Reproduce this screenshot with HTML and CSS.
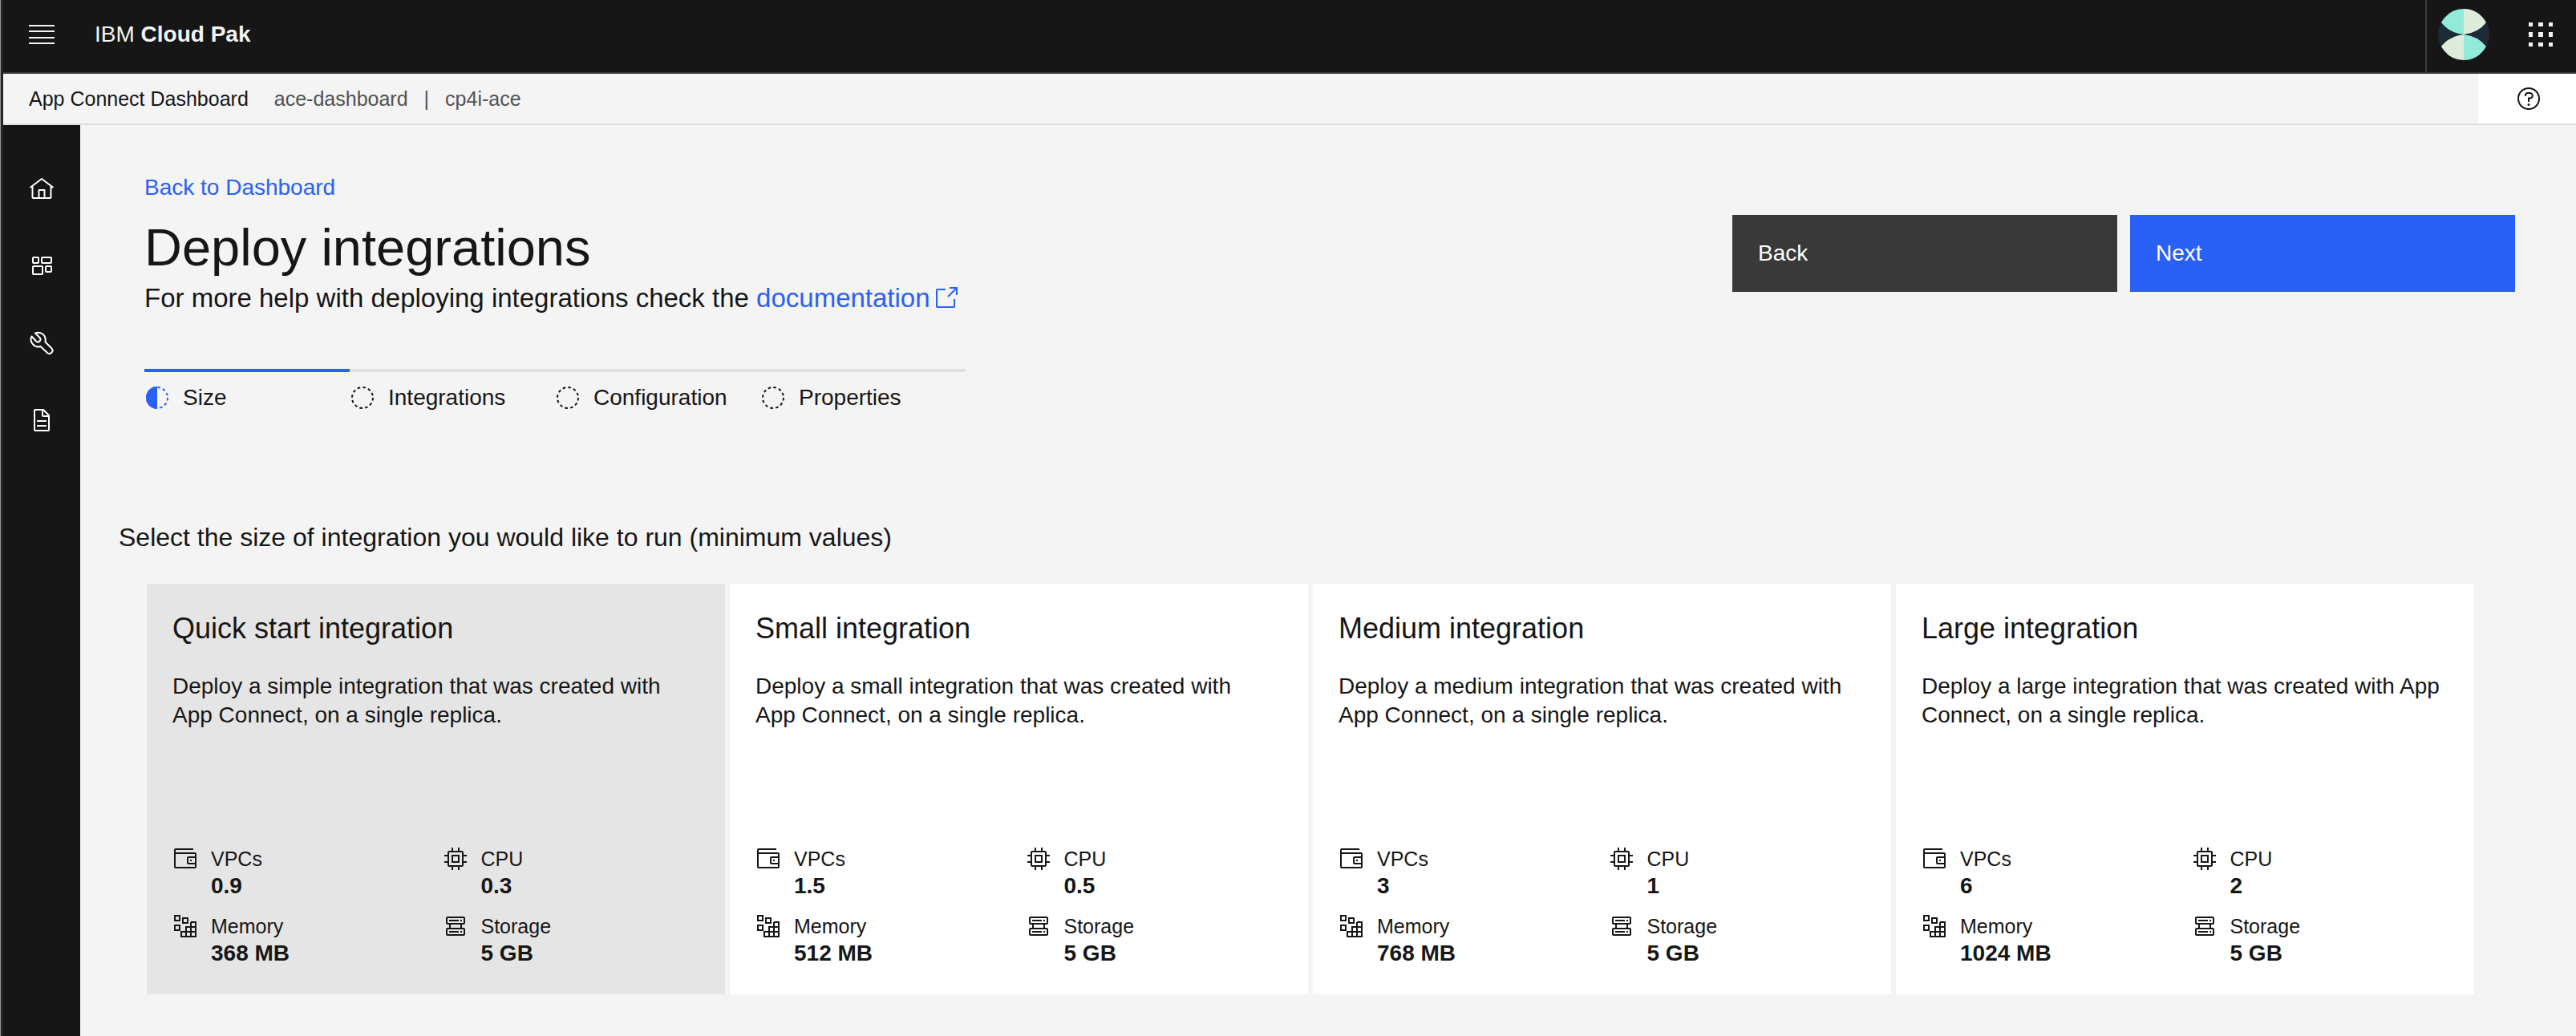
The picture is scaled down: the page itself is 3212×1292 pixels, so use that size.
FILE: index.html
```html
<!DOCTYPE html>
<html lang="en">
<head>
<meta charset="utf-8">
<title>Deploy integrations</title>
<link rel="stylesheet" href="styles.css">
</head>
<body>
<svg class="sprite" aria-hidden="true">
  <symbol id="wallet" viewBox="0 0 32 32"><g fill="none" stroke="currentColor" stroke-width="2"><path d="M26 4H4a1 1 0 0 0-1 1v21a1 1 0 0 0 1 1h24a1 1 0 0 0 1-1V10a1 1 0 0 0-1-1H3"/><path d="M29 14h-9a1 1 0 0 0-1 1v6a1 1 0 0 0 1 1h9"/></g><path fill="currentColor" d="M22 17h2v2h-2z"/></symbol>
  <symbol id="chip" viewBox="0 0 32 32"><path fill="currentColor" d="M11 11v10h10V11zm8 8h-6v-6h6z"/><path fill="currentColor" d="M30 13v-2h-4V8a2 2 0 0 0-2-2h-3V2h-2v4h-6V2h-2v4H8a2 2 0 0 0-2 2v3H2v2h4v6H2v2h4v3a2 2 0 0 0 2 2h3v4h2v-4h6v4h2v-4h3a2 2 0 0 0 2-2v-3h4v-2h-4v-6zm-6 11H8V8h16z"/></symbol>
  <symbol id="blocks" viewBox="0 0 32 32"><path fill="none" stroke="currentColor" stroke-width="2" d="M3 3h6v6H3zM13 6h6v6h-6zM3 15h6v6H3zM23 11h6v18H11v-6h18M17 29V17h12M23 11v18"/></symbol>
  <symbol id="storage" viewBox="0 0 32 32"><g fill="none" stroke="currentColor" stroke-width="2"><rect x="5" y="5" width="22" height="8" rx="1"/><rect x="5" y="19" width="22" height="8" rx="1"/><path d="M9 13v6M23 13v6M8 9h12M8 23h12M22 9h2M22 23h2"/></g></symbol>
  <symbol id="incomplete" viewBox="0 0 32 32"><circle cx="16" cy="16" r="13" fill="none" stroke="currentColor" stroke-width="2" stroke-dasharray="3.600 3.200"/></symbol>
</svg>

<header class="topbar">
  <button class="icon-button menu" aria-label="Open menu"><svg viewBox="0 0 32 24"><path fill="currentColor" d="M0 0h32v2H0zM0 7h32v2H0zM0 15h32v2H0zM0 22h32v2H0z"/></svg></button>
  <a class="brand" href="#">IBM <strong>Cloud Pak</strong></a>
  <div class="account">
    <button class="icon-button profile" aria-label="Account"><svg class="avatar" viewBox="0 0 64 64"><circle cx="32" cy="32" r="32" fill="#1c2b36"/><path fill="#93ead8" d="M32 0v32Q14 30 4 17 14 0 32 0zM32 32v32q18 0 28-17Q50 34 32 32z"/><path fill="#deecdb" d="M32 0v32q18-2 28-15Q50 0 32 0zM32 32v32Q14 64 4 47q10-13 28-15z"/></svg></button>
    <button class="icon-button switcher" aria-label="Switch app"><svg class="apps" viewBox="0 0 30 30"><path fill="#f4f4f4" d="M0 0h5v5H0zM12 0h6v5h-6zM25 0h5v5h-5zM0 12h5v6H0zM12 12h6v6h-6zM25 12h5v6h-5zM0 25h5v5H0zM12 25h6v5h-6zM25 25h5v5h-5z"/></svg></button>
  </div>
</header>

<div class="subbar">
  <div class="context"><span class="context-app">App Connect Dashboard</span><span>ace-dashboard</span><span class="divider">|</span><span>cp4i-ace</span></div>
  <button class="help" aria-label="Help"><svg viewBox="0 0 32 32"><circle cx="16" cy="16" r="13" fill="none" stroke="currentColor" stroke-width="2"/><circle cx="16" cy="23.500" r="1.500" fill="currentColor"/><path fill="none" stroke="currentColor" stroke-width="2" d="M12 13v-1a3 3 0 0 1 3-3h2.500a3 3 0 0 1 0 6.500H16V20"/></svg></button>
</div>

<div class="shell">
  <nav class="rail" aria-label="Main">
    <a href="#" aria-label="Home"><svg viewBox="0 0 32 32"><path fill="none" stroke="currentColor" stroke-width="2" stroke-linejoin="round" d="M1.500 14 16 3 30.500 14M4.500 12v14a1 1 0 0 0 1 1h21a1 1 0 0 0 1-1V12M12.500 27V17h7v10"/></svg></a>
    <a href="#" aria-label="Dashboard"><svg viewBox="0 0 32 32"><g fill="none" stroke="currentColor" stroke-width="2"><rect x="5" y="5" width="7" height="7" rx="1"/><rect x="16" y="5" width="12" height="7" rx="1"/><rect x="5" y="16" width="12" height="10" rx="1"/><rect x="21" y="16" width="7" height="7" rx="1"/></g></svg></a>
    <a href="#" aria-label="Tools"><svg viewBox="0 0 32 32"><path fill="none" stroke="currentColor" stroke-width="2" stroke-linejoin="round" d="M8 3.500C14 1 22 5 20.500 14.500l8 8a3.900 3.900 0 0 1-5.500 5.500l-8.500-8C7 22.500 0 14 3.500 7.500l5.500 6c3.500 3 7-1.500 4.500-4.500z"/></svg></a>
    <a href="#" aria-label="Documents"><svg viewBox="0 0 32 32"><path fill="none" stroke="currentColor" stroke-width="2" stroke-linejoin="round" d="M18 3H8a1 1 0 0 0-1 1v24a1 1 0 0 0 1 1h16a1 1 0 0 0 1-1V10zM17 3v7a1 1 0 0 0 1 1h7M10 17h12M10 23h12"/></svg></a>
  </nav>

  <main class="main">
    <div class="page-head">
      <div class="intro">
        <a class="back-link" href="#">Back to Dashboard</a>
        <h1>Deploy integrations</h1>
        <p class="lead">For more help with deploying integrations check the <a href="#">documentation<svg viewBox="0 0 32 32"><path fill="none" stroke="currentColor" stroke-width="2" d="M15 5H5a1 1 0 0 0-1 1v20a1 1 0 0 0 1 1h20a1 1 0 0 0 1-1V17M20 3h9v9M29 3 18 14"/></svg></a></p>
      </div>
      <div class="actions">
        <button class="btn btn-back">Back</button>
        <button class="btn btn-next">Next</button>
      </div>
    </div>

    <ol class="steps">
      <li class="current"><svg viewBox="0 0 32 32"><use href="#incomplete"/><path fill="currentColor" d="M16 2a14 14 0 0 0 0 28z"/></svg>Size</li>
      <li><svg viewBox="0 0 32 32"><use href="#incomplete"/></svg>Integrations</li>
      <li><svg viewBox="0 0 32 32"><use href="#incomplete"/></svg>Configuration</li>
      <li><svg viewBox="0 0 32 32"><use href="#incomplete"/></svg>Properties</li>
    </ol>

    <h2>Select the size of integration you would like to run (minimum values)</h2>

    <div class="tiles">
      <a class="tile selected" href="#">
        <h3>Quick start integration</h3>
        <p>Deploy a simple integration that was created with App Connect, on a single replica.</p>
        <dl>
          <div><svg><use href="#wallet"/></svg><dt>VPCs</dt><dd>0.9</dd></div>
          <div><svg><use href="#chip"/></svg><dt>CPU</dt><dd>0.3</dd></div>
          <div><svg><use href="#blocks"/></svg><dt>Memory</dt><dd>368 MB</dd></div>
          <div><svg><use href="#storage"/></svg><dt>Storage</dt><dd>5 GB</dd></div>
        </dl>
      </a>
      <a class="tile" href="#">
        <h3>Small integration</h3>
        <p>Deploy a small integration that was created with<br>App Connect, on a single replica.</p>
        <dl>
          <div><svg><use href="#wallet"/></svg><dt>VPCs</dt><dd>1.5</dd></div>
          <div><svg><use href="#chip"/></svg><dt>CPU</dt><dd>0.5</dd></div>
          <div><svg><use href="#blocks"/></svg><dt>Memory</dt><dd>512 MB</dd></div>
          <div><svg><use href="#storage"/></svg><dt>Storage</dt><dd>5 GB</dd></div>
        </dl>
      </a>
      <a class="tile" href="#">
        <h3>Medium integration</h3>
        <p>Deploy a medium integration that was created with App Connect, on a single replica.</p>
        <dl>
          <div><svg><use href="#wallet"/></svg><dt>VPCs</dt><dd>3</dd></div>
          <div><svg><use href="#chip"/></svg><dt>CPU</dt><dd>1</dd></div>
          <div><svg><use href="#blocks"/></svg><dt>Memory</dt><dd>768 MB</dd></div>
          <div><svg><use href="#storage"/></svg><dt>Storage</dt><dd>5 GB</dd></div>
        </dl>
      </a>
      <a class="tile" href="#">
        <h3>Large integration</h3>
        <p>Deploy a large integration that was created with App Connect, on a single replica.</p>
        <dl>
          <div><svg><use href="#wallet"/></svg><dt>VPCs</dt><dd>6</dd></div>
          <div><svg><use href="#chip"/></svg><dt>CPU</dt><dd>2</dd></div>
          <div><svg><use href="#blocks"/></svg><dt>Memory</dt><dd>1024 MB</dd></div>
          <div><svg><use href="#storage"/></svg><dt>Storage</dt><dd>5 GB</dd></div>
        </dl>
      </a>
    </div>
  </main>
</div>
</body>
</html>
```
FILE: styles.css
```css
* {
  box-sizing: border-box;
}

html {
  border-left: 1px solid #8f9392;
}

body {
  margin: 0;
  min-height: 100vh;
  display: flex;
  flex-direction: column;
  border-left: 3px solid #242727;
  background: #f4f4f4;
  color: #161616;
  font-family: "Liberation Sans", Arial, sans-serif;
  font-size: 28px;
  line-height: 36px;
}

h1, h2, h3, p, dl, dd, ol {
  margin: 0;
  padding: 0;
  font-weight: 400;
}

a {
  color: inherit;
  text-decoration: none;
}

button {
  padding: 0;
  border: 0;
  background: none;
  color: inherit;
  font: inherit;
}

svg {
  display: block;
  flex: none;
  width: 32px;
  height: 32px;
}

.sprite {
  position: absolute;
  width: 0;
  height: 0;
}

/* Top bar */
.topbar {
  display: flex;
  align-items: stretch;
  height: 92px;
  border-bottom: 2px solid #393939;
  background: #161616;
  color: #f4f4f4;
}

.icon-button {
  display: flex;
  align-items: center;
  justify-content: center;
  width: 96px;
  padding-bottom: 4px;
}

.menu svg {
  height: 24px;
}

.brand {
  padding: 25px 0 0 18px;
}

.account {
  display: flex;
  margin-left: auto;
  border-left: 2px solid #393939;
}

.profile {
  width: 92px;
}

.switcher {
  width: 94px;
  padding-left: 6px;
}

.avatar {
  width: 64px;
  height: 64px;
}

.apps {
  width: 30px;
  height: 30px;
}

/* Context bar */
.subbar {
  display: flex;
  align-items: stretch;
  height: 64px;
  border-bottom: 2px solid #e0e0e0;
  font-size: 25px;
}

.context {
  display: flex;
  align-items: center;
  padding-left: 32px;
  color: #525252;
}

.context-app {
  margin-right: 32px;
  color: #161616;
}

.divider {
  margin: 0 20px;
}

.help {
  display: flex;
  align-items: center;
  justify-content: center;
  width: 122px;
  margin-left: auto;
  padding-left: 4px;
  background: #fff;
}

/* Side rail and page */
.shell {
  display: flex;
  flex: 1;
}

.rail {
  flex: none;
  display: flex;
  flex-direction: column;
  width: 96px;
  padding-top: 32px;
  background: #161616;
  color: #fff;
}

.rail a {
  display: flex;
  align-items: center;
  justify-content: center;
  height: 96px;
}

.main {
  flex: 1;
  min-width: 0;
  padding: 60px 76px 48px 48px;
}

.page-head {
  display: flex;
  justify-content: space-between;
  padding-left: 32px;
}

.intro a {
  color: #2b60f6;
}

h1 {
  margin-top: 17px;
  font-size: 65px;
  line-height: 80px;
}

.lead {
  display: flex;
  margin-top: 3px;
  font-size: 33px;
  line-height: 40px;
  white-space: pre;
}

.lead a {
  display: flex;
  align-items: center;
  gap: 4px;
}

.actions {
  display: flex;
  gap: 16px;
  padding-top: 52px;
}

.btn {
  width: 480px;
  height: 96px;
  padding: 0 32px;
  color: #fff;
  text-align: left;
}

.btn-back {
  background: #393939;
}

.btn-next {
  background: #2b60f6;
}

/* Progress steps */
.steps {
  display: grid;
  grid-template-columns: repeat(4, 256px);
  margin: 68px 0 0 32px;
  list-style: none;
}

.steps li {
  display: flex;
  align-items: center;
  gap: 16px;
  padding-top: 14px;
  border-top: 4px solid #e0e0e0;
}

.steps .current {
  border-color: #2b60f6;
}

.current svg {
  color: #2b60f6;
}

h2 {
  margin-top: 136px;
  font-size: 32px;
  line-height: 40px;
}

/* Size tiles */
.tiles {
  display: grid;
  grid-template-columns: repeat(4, 1fr);
  gap: 6px;
  margin: 38px 51px 0 35px;
}

.tile {
  display: flex;
  flex-direction: column;
  min-height: 512px;
  padding: 34px 32px 33px;
  background: #fff;
}

.tile.selected {
  background: #e5e5e5;
}

h3 {
  margin-bottom: 32px;
  font-size: 36px;
  line-height: 44px;
}

dl {
  display: grid;
  grid-template-columns: 1fr 1fr;
  gap: 16px;
  margin-top: auto;
}

dl div {
  display: grid;
  grid-template-columns: 32px 1fr;
  column-gap: 16px;
}

dl svg {
  grid-row: 1 / 3;
}

dt {
  font-size: 25px;
  line-height: 32px;
}

dd {
  font-weight: 700;
}
```
